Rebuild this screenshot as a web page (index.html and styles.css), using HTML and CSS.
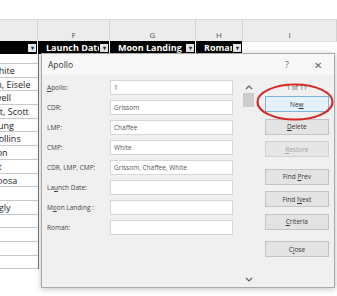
FILE: index.html
```html
<!DOCTYPE html>
<html lang="en">
<head>
    <meta charset="UTF-8">
    <meta name="viewport" content="width=device-width, initial-scale=1.0">
    <title>Apollo Data Form</title>
    <link rel="stylesheet" href="styles.css">
</head>
<body>

    <!-- Worksheet behind the form -->
    <div class="sheet">
        <div class="col-letters">
            <div class="col col-e"></div>
            <div class="col col-f">F</div>
            <div class="col col-g">G</div>
            <div class="col col-h">H</div>
            <div class="col col-i">I</div>
        </div>

        <div class="table-head">
            <div class="th col-e"><span class="th-text"></span><span class="drop">&#9662;</span></div>
            <div class="th col-f"><span class="th-text">Launch Date</span><span class="drop">&#9662;</span></div>
            <div class="th col-g"><span class="th-text">Moon Landing</span><span class="drop">&#9662;</span></div>
            <div class="th col-h"><span class="th-text">Roman</span><span class="drop">&#9662;</span></div>
            <div class="th-blank col-i"></div>
        </div>

        <div class="rows">
            <div class="row row-top"></div>
            <div class="row"><span class="crew">Grissom, Chaffee, White</span></div>
            <div class="row"><span class="crew">Schirra, Cunningham, Eisele</span></div>
            <div class="row"><span class="crew">Borman, Anders, Lovell</span></div>
            <div class="row"><span class="crew">McDivitt, Schweickart, Scott</span></div>
            <div class="row"><span class="crew">Stafford, Cernan, Young</span></div>
            <div class="row"><span class="crew">Armstrong, Aldrin, Collins</span></div>
            <div class="row"><span class="crew">Conrad, Bean, Gordon</span></div>
            <div class="row"><span class="crew">Lovell, Haise, Swigert</span></div>
            <div class="row"><span class="crew">Shepard, Mitchell, Roosa</span></div>
            <div class="row"><span class="crew">Scott, Irwin, Worden</span></div>
            <div class="row"><span class="crew">Young, Duke, Mattingly</span></div>
            <div class="row"></div>
            <div class="row"></div>
            <div class="row"></div>
            <div class="row"></div>
        </div>
    </div>

    <!-- Data form dialog -->
    <div class="dialog">
        <div class="titlebar">
            <span class="title">Apollo</span>
            <span class="tb-btn">?</span>
            <span class="tb-btn tb-close">&#10005;</span>
        </div>

        <div class="dialog-body">
            <div class="fields">
                <label><u>A</u>pollo:</label>
                <div class="input">1</div>
                <label>CDR:</label>
                <div class="input">Grissom</div>
                <label>LMP:</label>
                <div class="input">Chaffee</div>
                <label>CMP:</label>
                <div class="input">White</div>
                <label>CDR, LMP, CMP:</label>
                <div class="input">Grissom, Chaffee, White</div>
                <label>La<u>u</u>nch Date:</label>
                <div class="input"></div>
                <label>M<u>o</u>on Landing :</label>
                <div class="input"></div>
                <label>Roman:</label>
                <div class="input"></div>
            </div>

            <div class="scroll">
                <svg class="chev" width="8" height="5" viewBox="0 0 8 5"><path d="M1 4 L4 1 L7 4" fill="none" stroke="#606060" stroke-width="1.2"/></svg>
                <div class="thumb"></div>
                <div class="scroll-space"></div>
                <svg class="chev" width="8" height="5" viewBox="0 0 8 5"><path d="M1 1 L4 4 L7 1" fill="none" stroke="#606060" stroke-width="1.2"/></svg>
            </div>

            <div class="buttons">
                <div class="record">1 of 11</div>
                <button class="btn btn-default">Ne<u>w</u></button>
                <button class="btn"><u>D</u>elete</button>
                <button class="btn" disabled><u>R</u>estore</button>
                <button class="btn btn-group">Find <u>P</u>rev</button>
                <button class="btn">Find <u>N</u>ext</button>
                <button class="btn"><u>C</u>riteria</button>
                <button class="btn btn-group">C<u>l</u>ose</button>
            </div>
        </div>
    </div>

    <!-- Red circle drawn around the New button -->
    <svg class="ring" width="80" height="40" viewBox="0 0 80 40">
        <ellipse cx="40" cy="20" rx="37.5" ry="17.5" fill="none" stroke="#d42b2b" stroke-width="2.2"/>
    </svg>

</body>
</html>
```

FILE: styles.css
```css
body {
    margin: 0;
    padding: 0;
    width: 337px;
    height: 296px;
    overflow: hidden;
    background-color: #fff;
    font-family: 'Open Sans', 'Noto Sans', sans-serif;
    color: #222;
    position: relative;
}
.sheet {
    padding-top: 19px;
}
.col-e { width: 38px; }
.col-f { width: 72px; }
.col-g { width: 86px; }
.col-h { width: 47px; }
.col-i { width: 94px; }

/* column letters */
.col-letters {
    display: flex;
    height: 21px;
    background-color: #ececec;
    border-top: 1px solid #dadada;
}
.col {
    box-sizing: border-box;
    border-right: 1px solid #d2d2d2;
    font-size: 8px;
    color: #555;
    text-align: center;
    padding-top: 9px;
}

/* black table header */
.table-head {
    display: flex;
    height: 13px;
}
.th {
    box-sizing: border-box;
    display: flex;
    align-items: center;
    background-color: #000;
    color: #fff;
    font-size: 9px;
    font-weight: bold;
    padding-left: 8px;
    padding-right: 1px;
    border-right: 1px solid #fff;
    overflow: hidden;
}
.th-text {
    flex: 1;
    white-space: nowrap;
    overflow: hidden;
}
.drop {
    width: 8px;
    height: 8px;
    background-color: #e8e8e8;
    color: #333;
    font-size: 6px;
    line-height: 8px;
    text-align: center;
    flex-shrink: 0;
    margin-left: 1px;
}
.th-blank {
    border-top: 1px solid #ddd;
}

/* data rows, column E only shows */
.rows {
    width: 38px;
    border-right: 1.5px solid #777;
}
.row {
    height: 13.7px;
    box-sizing: border-box;
    border-bottom: 1px solid #c8c8c8;
    overflow: hidden;
    white-space: nowrap;
    font-size: 9px;
    line-height: 13px;
    color: #222;
}
.row-top {
    height: 10px;
}
.crew {
    display: inline-block;
    margin-left: -86px;
}

/* dialog */
.dialog {
    position: absolute;
    left: 41px;
    top: 53px;
    width: 294px;
    height: 235px;
    box-sizing: border-box;
    border: 1px solid #a8a8a8;
    background-color: #f0f0f0;
    box-shadow: 0 1px 6px rgba(0, 0, 0, 0.25);
    display: flex;
    flex-direction: column;
}
.titlebar {
    display: flex;
    align-items: center;
    height: 21px;
    background-color: #f8f8f8;
    padding-left: 6px;
    padding-right: 6px;
}
.title {
    flex: 1;
    font-size: 8.5px;
    color: #333;
}
.tb-btn {
    width: 20px;
    text-align: center;
    font-size: 9px;
    color: #666;
}
.tb-close {
    margin-left: 11px;
    font-size: 10px;
}
.dialog-body {
    flex: 1;
    display: flex;
    padding: 5px 5px 0 5px;
}
.fields {
    width: 186px;
    display: grid;
    grid-template-columns: 63px 123px;
    grid-auto-rows: 15px;
    row-gap: 5px;
    align-items: center;
    align-content: start;
}
label {
    font-size: 6.5px;
    color: #444;
    white-space: nowrap;
}
.input {
    height: 15px;
    box-sizing: border-box;
    background-color: #fff;
    border: 1px solid #d6d6d6;
    font-size: 6.5px;
    color: #555;
    line-height: 13px;
    padding-left: 3px;
}
.scroll {
    width: 12px;
    margin-left: 10px;
    padding-top: 5px;
    padding-bottom: 5px;
    display: flex;
    flex-direction: column;
    align-items: center;
}
.chev {
    display: block;
}
.thumb {
    width: 11px;
    height: 14px;
    background-color: #cdcdcd;
    margin-top: 3px;
}
.scroll-space {
    flex: 1;
}
.buttons {
    width: 66px;
    margin-left: 10px;
    display: flex;
    flex-direction: column;
}
.record {
    height: 16px;
    font-size: 6.5px;
    color: #555;
    text-align: center;
    line-height: 16px;
}
.btn {
    height: 16px;
    margin: 0 0 6.5px 0;
    padding: 0;
    border: 1px solid #c4c4c4;
    background-color: #e3e3e3;
    font-family: 'Open Sans', 'Noto Sans', sans-serif;
    font-size: 6.5px;
    color: #333;
}
.btn-default {
    background-color: #e5f1fb;
    border-color: #7ab2e0;
}
.btn:disabled {
    color: #a5a5a5;
    background-color: #e6e6e6;
    border-color: #d2d2d2;
}
.btn-group {
    margin-top: 5px;
}
.ring {
    position: absolute;
    left: 255px;
    top: 82px;
}
```
